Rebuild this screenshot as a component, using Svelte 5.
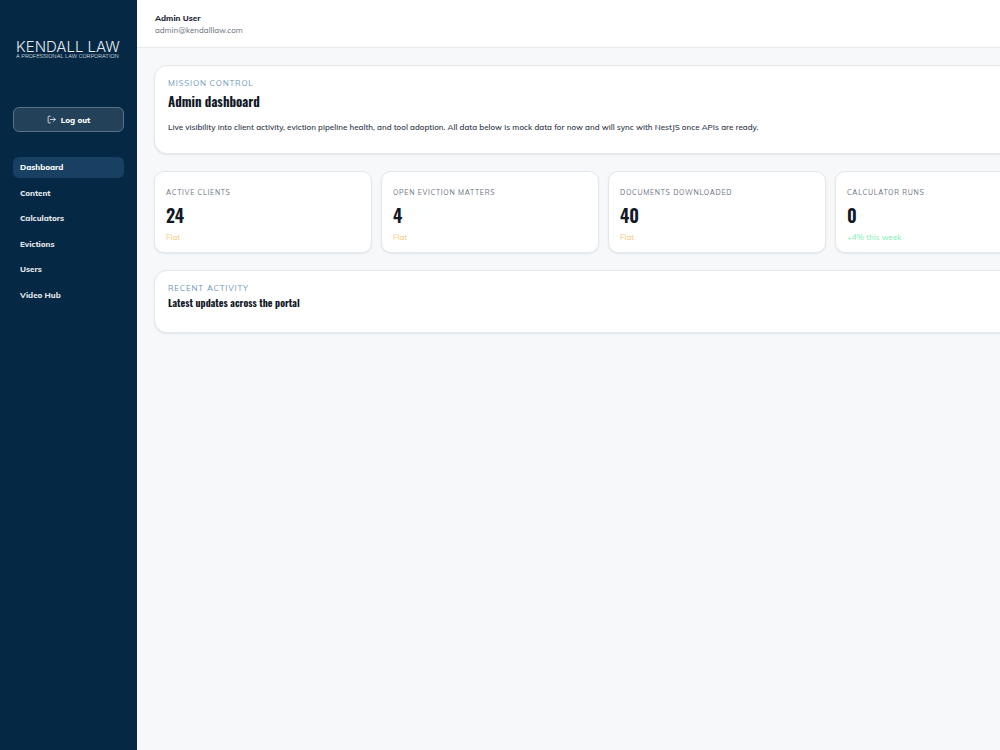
<script lang="ts">
  type Trend = "flat" | "up";

  type Stat = {
    label: string;
    value: number;
    note: string;
    trend: Trend;
  };

  const links = ["Dashboard", "Content", "Calculators", "Evictions", "Users", "Video Hub"];

  const stats: Stat[] = [
    { label: "Active clients", value: 24, note: "Flat", trend: "flat" },
    { label: "Open eviction matters", value: 4, note: "Flat", trend: "flat" },
    { label: "Documents downloaded", value: 40, note: "Flat", trend: "flat" },
    { label: "Calculator runs", value: 0, note: "+4% this week", trend: "up" },
  ];

  let current = $state("Dashboard");
</script>

<div class="shell">
  <aside class="sidebar">
    <div class="brand">
      <span class="brand-name">KENDALL LAW</span>
      <span class="brand-tag">A PROFESSIONAL LAW CORPORATION</span>
    </div>

    <button class="logout" type="button">
      <svg viewBox="0 0 24 24" aria-hidden="true">
        <path d="M9 3H5a2 2 0 0 0-2 2v14a2 2 0 0 0 2 2h4" />
        <path d="M9 12h13M17 7l5 5-5 5" />
      </svg>
      Log out
    </button>

    <nav>
      {#each links as link}
        <a
          href="#{link.toLowerCase().replace(' ', '-')}"
          class:active={link === current}
          aria-current={link === current ? "page" : undefined}
          onclick={() => (current = link)}
        >
          {link}
        </a>
      {/each}
    </nav>
  </aside>

  <div class="content">
    <header>
      <span class="user-name">Admin User</span>
      <span class="user-email">admin@kendalllaw.com</span>
    </header>

    <main>
      <section class="panel intro">
        <p class="eyebrow">Mission control</p>
        <h1>Admin dashboard</h1>
        <p class="lead">
          Live visibility into client activity, eviction pipeline health, and tool adoption. All
          data below is mock data for now and will sync with NestJS once APIs are ready.
        </p>
      </section>

      <section class="stats" aria-label="Portal statistics">
        {#each stats as stat}
          <article class="stat">
            <p class="stat-label">{stat.label}</p>
            <p class="stat-value">{stat.value}</p>
            <p class="stat-note {stat.trend}">{stat.note}</p>
          </article>
        {/each}
      </section>

      <section class="panel activity">
        <p class="eyebrow">Recent activity</p>
        <h2>Latest updates across the portal</h2>
      </section>
    </main>
  </div>
</div>

<style>
  :global(body) {
    background: #f6f8fa;
    overflow-x: hidden;
  }

  .shell {
    --body: Mulish, Muli, Lato, "Open Sans", sans-serif;
    --display: Oswald, "Roboto Condensed", "Liberation Sans Narrow", sans-serif;
    color: #111827;
    display: grid;
    font-family: var(--body);
    font-size: 8px;
    grid-template-columns: 137px minmax(0, 1fr);
    line-height: 12px;
    min-height: 100vh;
  }

  p,
  h1,
  h2 {
    margin: 0;
  }

  .sidebar {
    background: #052844;
    box-sizing: border-box;
    display: flex;
    flex-direction: column;
    padding: 40px 13px;
  }

  .brand {
    color: #e6ebef;
    display: flex;
    flex-direction: column;
    font-weight: 300;
    margin-bottom: 48px;
    padding-left: 3px;
    white-space: nowrap;
  }

  .brand-name {
    font-family: Inter, sans-serif;
    font-size: 15px;
    line-height: 13px;
  }

  .brand-tag {
    font-family: Roboto, sans-serif;
    font-size: 6px;
    line-height: 6px;
  }

  .logout {
    align-items: center;
    background: #24415a;
    border: 1px solid #5b7083;
    border-radius: 6px;
    color: #fff;
    cursor: pointer;
    display: flex;
    font: inherit;
    font-weight: 800;
    gap: 5px;
    height: 25px;
    justify-content: center;
    margin-bottom: 25px;
    padding: 0;
  }

  .logout svg {
    fill: none;
    height: 9px;
    stroke: currentColor;
    stroke-linecap: round;
    stroke-linejoin: round;
    stroke-width: 2;
    width: 9px;
  }

  nav {
    display: flex;
    flex-direction: column;
    height: 149px;
    justify-content: space-between;
  }

  nav a {
    border-radius: 6px;
    color: #e1e6ea;
    font-weight: 800;
    line-height: 21px;
    padding: 0 7px;
    text-decoration: none;
  }

  nav a.active {
    background: #184062;
    color: #fff;
  }

  header {
    background: #fff;
    border-bottom: 1px solid #e8ebee;
    display: flex;
    flex-direction: column;
    padding: 12px 18px 11px;
  }

  .user-name {
    color: #1f2937;
    font-weight: 800;
  }

  .user-email {
    color: #6b7280;
  }

  /* the four stat cards set the narrowest width of the page body */
  main {
    display: grid;
    gap: 17px;
    grid-template-columns: minmax(min-content, 1fr);
    padding: 17px;
  }

  .panel,
  .stat {
    background: #fff;
    border: 1px solid #e5e8eb;
    box-shadow: 0 1px 2px rgb(15 23 42 / 8%);
    box-sizing: border-box;
  }

  .panel {
    border-radius: 13px;
    padding: 11px 13px 20px;
  }

  .eyebrow {
    color: #6f97b9;
    letter-spacing: 0.1em;
    text-transform: uppercase;
  }

  h1,
  h2 {
    font-family: var(--display);
    font-weight: 700;
  }

  h1 {
    font-size: 13px;
    line-height: 24px;
    margin-bottom: 8px;
  }

  h2 {
    font-size: 10px;
    line-height: 18px;
  }

  .lead {
    color: #374151;
    font-weight: 600;
  }

  .stats {
    display: grid;
    gap: 9px;
    grid-template-columns: repeat(4, minmax(218px, 1fr));
  }

  .stat {
    border-radius: 10px;
    padding: 15px 11px 9px;
  }

  .stat-label {
    color: #6b7280;
    font-size: 7px;
    letter-spacing: 0.1em;
    text-transform: uppercase;
  }

  .stat-value {
    font-family: var(--display);
    font-size: 18px;
    font-weight: 600;
    line-height: 33px;
  }

  .stat-note {
    line-height: 11px;
  }

  .flat {
    color: #fbca7c;
  }

  .up {
    color: #7ff0b4;
  }
</style>
